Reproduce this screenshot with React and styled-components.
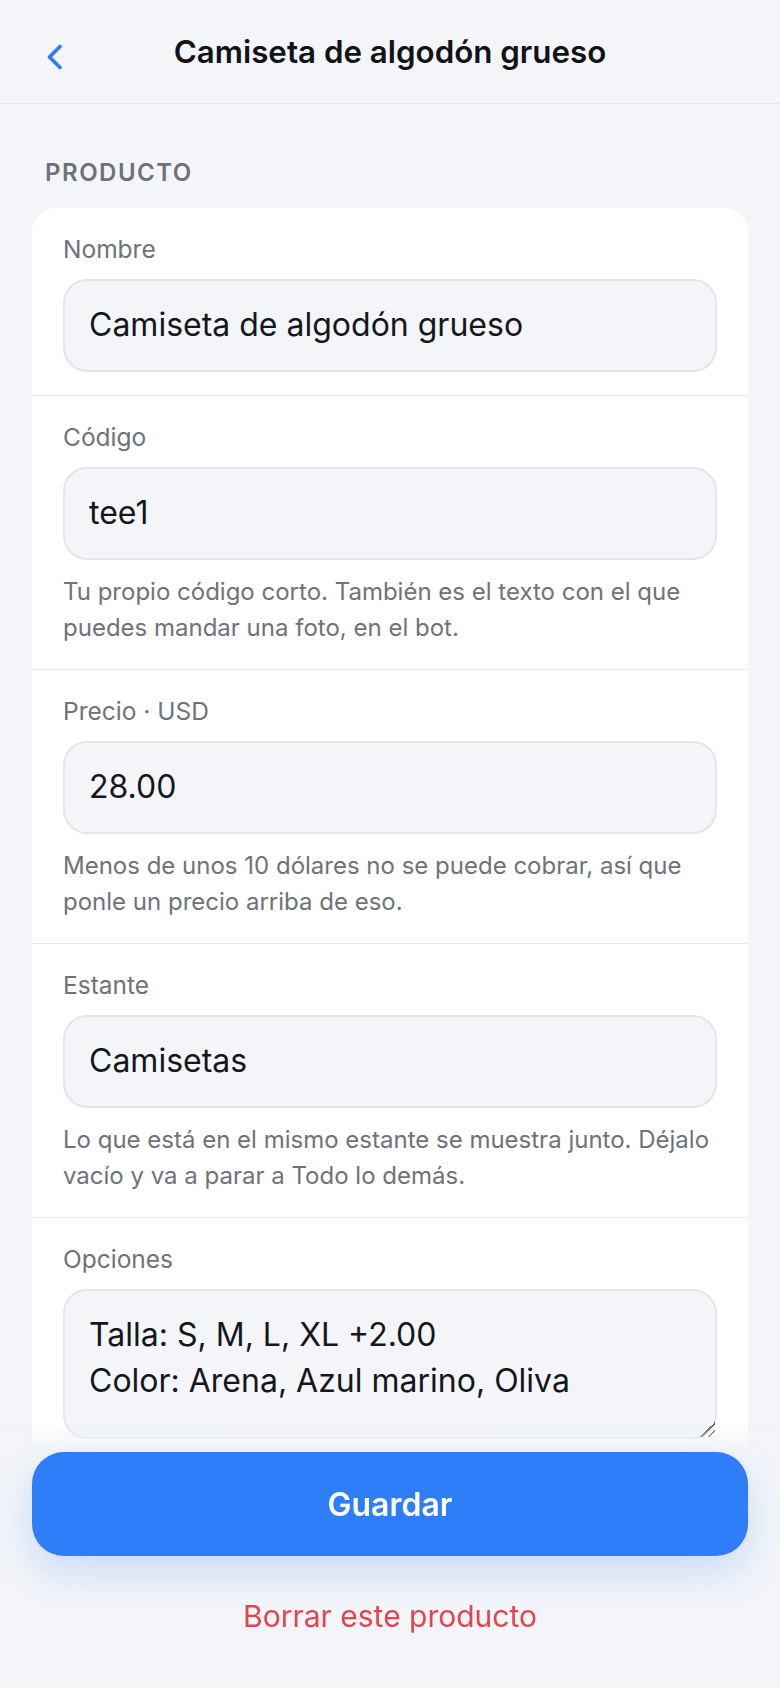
import React from "react";
import styled, { createGlobalStyle } from "styled-components";

const GlobalStyle = createGlobalStyle`
  * { box-sizing: border-box; }
  html, body {
    margin: 0;
    background: #f4f5f8;
    font-family: Inter, "Noto Sans", sans-serif;
    color: #15171c;
  }
`;

const fields = [
  { label: "Nombre", value: "Camiseta de algodón grueso" },
  {
    label: "Código",
    value: "tee1",
    hint: "Tu propio código corto. También es el texto con el que puedes mandar una foto, en el bot.",
  },
  {
    label: "Precio · USD",
    value: "28.00",
    hint: "Menos de unos 10 dólares no se puede cobrar, así que ponle un precio arriba de eso.",
  },
  {
    label: "Estante",
    value: "Camisetas",
    hint: "Lo que está en el mismo estante se muestra junto. Déjalo vacío y va a parar a Todo lo demás.",
  },
  {
    label: "Opciones",
    value: "Talla: S, M, L, XL +2.00\nColor: Arena, Azul marino, Oliva",
    multiline: true,
  },
];

export default function App() {
  return (
    <Page>
      <GlobalStyle />
      <Header>
        <BackButton aria-label="Volver">
          <svg width="18" height="26" viewBox="0 0 18 26" fill="none">
            <path
              d="M14 2.5 L3.5 13 L14 23.5"
              stroke="#2f7bf5"
              strokeWidth="3.6"
              strokeLinecap="round"
              strokeLinejoin="round"
            />
          </svg>
        </BackButton>
        <Title>Camiseta de algodón grueso</Title>
        <span />
      </Header>

      <Main>
        <SectionTitle>Producto</SectionTitle>
        <Card>
          {fields.map((f) => (
            <Field key={f.label}>
              <Label>{f.label}</Label>
              {f.multiline ? (
                <TextArea defaultValue={f.value} />
              ) : (
                <Input defaultValue={f.value} />
              )}
              {f.hint && <Hint>{f.hint}</Hint>}
            </Field>
          ))}
        </Card>
      </Main>

      <Footer>
        <SaveButton>Guardar</SaveButton>
        <DeleteButton>Borrar este producto</DeleteButton>
      </Footer>
    </Page>
  );
}

const Page = styled.div`
  height: 100vh;
  overflow: hidden;
  display: flex;
  flex-direction: column;
`;

const Header = styled.header`
  flex: none;
  height: 104px;
  border-bottom: 1px solid #e4e6ea;
  display: grid;
  grid-template-columns: 1fr auto 1fr;
  align-items: center;
`;

const BackButton = styled.button`
  align-self: start;
  justify-self: start;
  margin: 44px 0 0 46px;
  padding: 0;
  border: none;
  background: none;
  display: flex;
  cursor: pointer;
`;

const Title = styled.h1`
  margin: 0;
  font-size: 31.3px;
  font-weight: 600;
  line-height: 38px;
  color: #111318;
  white-space: nowrap;
`;

const Main = styled.main`
  padding: 54px 32px 0;
`;

const SectionTitle = styled.div`
  padding-left: 13px;
  margin-bottom: 21px;
  font-size: 24px;
  font-weight: 600;
  line-height: 29px;
  letter-spacing: 1.5px;
  text-transform: uppercase;
  color: #6c717a;
`;

const Card = styled.div`
  background: #fff;
  border-radius: 24px;
  overflow: hidden;
`;

const Field = styled.div`
  display: flex;
  flex-direction: column;
  padding: 26px 31px 23px;
  border-bottom: 1px solid #e8e9ed;

  &:last-child {
    border-bottom: none;
  }
`;

const Label = styled.label`
  font-size: 24.5px;
  line-height: 30px;
  color: #6e727b;
  margin-bottom: 15px;
`;

const controlBase = `
  width: 100%;
  background: #f4f5f8;
  border: 2px solid #e3e5ea;
  border-radius: 24px;
  font-family: Inter, "Noto Sans", sans-serif;
  font-size: 32px;
  color: #15171c;
  outline: none;
`;

const Input = styled.input`
  ${controlBase}
  height: 93px;
  padding: 0 24px 3px;
`;

const TextArea = styled.textarea`
  ${controlBase}
  height: 150px;
  padding: 21px 24px 19px;
  line-height: 46px;
  resize: vertical;

  &::-webkit-resizer {
    background: linear-gradient(
      135deg,
      transparent 0 50%,
      #5c5f66 50% 58%,
      transparent 58% 74%,
      #5c5f66 74% 82%,
      transparent 82%
    );
  }
`;

const Hint = styled.p`
  margin: 14px 0 0;
  font-size: 24px;
  line-height: 36px;
  color: #6e727b;
`;

const Footer = styled.footer`
  position: fixed;
  left: 0;
  right: 0;
  bottom: 0;
  padding: 28px 32px 54px;
  display: flex;
  flex-direction: column;
  align-items: center;
  background: linear-gradient(
    to bottom,
    rgba(244, 245, 248, 0) 0,
    #f4f5f8 28px
  );
`;

const SaveButton = styled.button`
  width: 100%;
  height: 104px;
  border: none;
  border-radius: 32px;
  background: #2e7df9;
  color: #fff;
  font-family: Inter, "Noto Sans", sans-serif;
  font-size: 32px;
  font-weight: 600;
  box-shadow: 0 16px 40px rgba(46, 125, 249, 0.22);
  cursor: pointer;
`;

const DeleteButton = styled.button`
  margin-top: 42px;
  padding: 0;
  border: none;
  background: none;
  font-family: Inter, "Noto Sans", sans-serif;
  font-size: 30px;
  line-height: 36px;
  color: #e2454f;
  cursor: pointer;
`;
